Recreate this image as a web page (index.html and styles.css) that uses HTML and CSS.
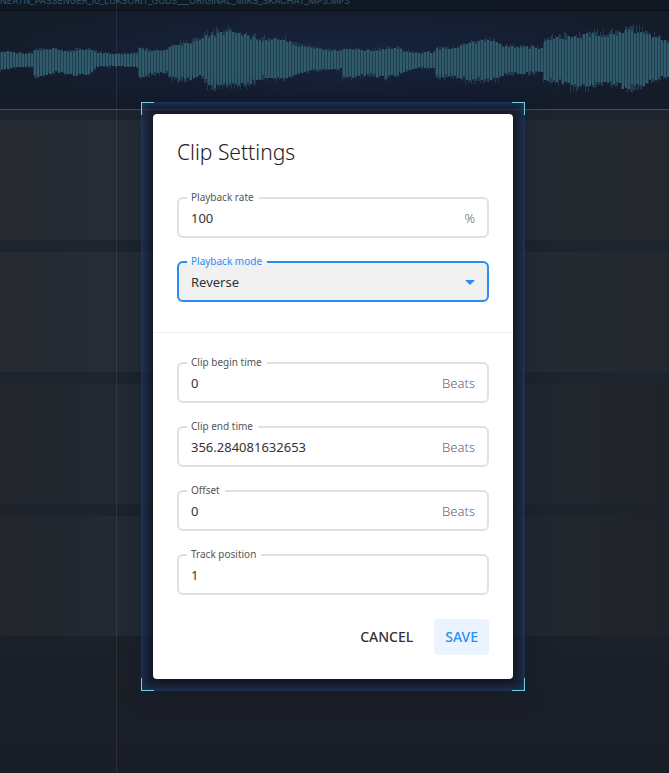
FILE: index.html
```html
<!DOCTYPE html>
<html lang="en">
<head>
    <meta charset="UTF-8">
    <meta name="viewport" content="width=device-width, initial-scale=1.0">
    <title>Clip Settings</title>
    <link rel="stylesheet" href="styles.css">
</head>
<body>
    <div class="timeline">
        <div class="clip">
            <div class="clip-name">NEATN_PASSENGER_10_LUKSORIT_GUDS___ORIGINAL_MIKS_SKACHAT_MP3.MP3</div>
            <svg id="waveform" class="waveform" viewBox="0 0 669 97" preserveAspectRatio="none"></svg>
        </div>
        <div class="track"></div>
        <div class="track"></div>
        <div class="track"></div>
        <div class="track"></div>
        <div class="playhead"></div>
    </div>

    <div class="overlay">
        <div class="frame">
            <span class="corner top left"></span>
            <span class="corner top right"></span>
            <span class="corner bottom left"></span>
            <span class="corner bottom right"></span>

            <form class="dialog" role="dialog" aria-labelledby="title">
                <h1 class="title" id="title">Clip Settings</h1>
                <div class="section playback">
                    <fieldset class="field">
                        <legend><label for="rate">Playback rate</label></legend>
                        <div class="field-row">
                            <input id="rate" type="text" value="100">
                            <span class="unit">%</span>
                        </div>
                    </fieldset>
                    <fieldset class="field active">
                        <legend><label for="mode">Playback mode</label></legend>
                        <div class="field-row">
                            <select id="mode">
                                <option>Reverse</option>
                                <option>Normal</option>
                            </select>
                            <svg class="arrow" viewBox="0 0 10 5"><path d="M0 0h10L5 5z"/></svg>
                        </div>
                    </fieldset>
                </div>
                <div class="section">
                    <fieldset class="field">
                        <legend><label for="begin">Clip begin time</label></legend>
                        <div class="field-row">
                            <input id="begin" type="text" value="0">
                            <span class="unit">Beats</span>
                        </div>
                    </fieldset>
                    <fieldset class="field">
                        <legend><label for="end">Clip end time</label></legend>
                        <div class="field-row">
                            <input id="end" type="text" value="356.284081632653">
                            <span class="unit">Beats</span>
                        </div>
                    </fieldset>
                    <fieldset class="field">
                        <legend><label for="offset">Offset</label></legend>
                        <div class="field-row">
                            <input id="offset" type="text" value="0">
                            <span class="unit">Beats</span>
                        </div>
                    </fieldset>
                    <fieldset class="field">
                        <legend><label for="position">Track position</label></legend>
                        <div class="field-row">
                            <input id="position" type="text" value="1">
                        </div>
                    </fieldset>
                </div>
                <div class="actions">
                    <button type="button" class="button">CANCEL</button>
                    <button type="button" class="button primary">SAVE</button>
                </div>
            </form>
        </div>
    </div>

    <script src="waveform.js"></script>
</body>
</html>
```
FILE: styles.css
```css
* {
    box-sizing: border-box;
}

body {
    margin: 0;
    min-height: 100vh;
    background-color: #1a1f27;
    color: #333;
    font-family: "Noto Sans", "Open Sans", sans-serif;
    font-size: 13px;
    overflow: hidden;
}

.timeline {
    position: relative;
    min-height: 100vh;
    background: linear-gradient(#1f252e, #1e242d 500px, #191d25);
}

.clip {
    height: 110px;
    background: radial-gradient(ellipse at 50% 50%, #17233f, #141c2a 75%);
    border-bottom: 1px solid #315565;
    margin-bottom: 10px;
}

.clip-name {
    height: 11px;
    background-color: #101923;
    border-bottom: 1px solid #090d14;
    color: #2f5a6b;
    font-family: Inter, sans-serif;
    font-size: 9px;
    line-height: 1px;
    white-space: nowrap;
}

.waveform {
    display: block;
    width: 100%;
    height: 97px;
}

.wave-peak {
    fill: #203c4e;
}

.wave-body {
    fill: #2f5b6b;
}

.track {
    height: 120px;
    margin-bottom: 12px;
    background: linear-gradient(90deg, #262930, #252d37 20%, #252a32 80%, #24272e);
}

.track:nth-child(n+4) {
    background: linear-gradient(90deg, #22252c, #222a33 20%, #22272f 80%, #202329);
}

.playhead {
    position: absolute;
    top: 0;
    bottom: 0;
    left: 116px;
    width: 1px;
    background-color: rgba(255, 255, 255, 0.08);
}

.overlay {
    position: absolute;
    top: 0;
    left: 0;
    right: 0;
    display: flex;
    justify-content: center;
    padding: 102px 3px 0 0;
}

.frame {
    position: relative;
    width: 100%;
    max-width: 384px;
    padding: 12px;
    background-color: rgba(24, 34, 56, 0.6);
    box-shadow: inset 0 0 10px #26427a, 0 0 24px rgba(10, 20, 40, 0.35);
}

.corner {
    position: absolute;
    width: 13px;
    height: 13px;
    border: 0 solid #6fd0e8;
}

.top {
    top: 0;
    border-top-width: 1px;
}

.bottom {
    bottom: 0;
    border-bottom-width: 1px;
}

.left {
    left: 0;
    border-left-width: 1px;
}

.right {
    right: 0;
    border-right-width: 1px;
}

.dialog {
    background-color: #fff;
    border-radius: 4px;
    box-shadow: 0 1px 8px rgba(10, 12, 18, 0.8);
}

.title {
    margin: 0;
    padding: 24px 24px 0;
    color: #212121;
    font-size: 21px;
    font-weight: 300;
    line-height: 28px;
}

.section {
    display: flex;
    flex-direction: column;
    gap: 17px;
    padding: 23px 24px 24px;
}

.playback {
    padding: 25px 24px 30px;
    border-bottom: 1px solid #eee;
}

.field {
    margin: 0;
    min-width: 0;
    padding: 0 12px 5px;
    border: 2px solid #e0e0e0;
    border-radius: 6px;
}

.field legend {
    height: 14px;
    margin-left: -4px;
    padding: 0 5px 0 4px;
    color: #555;
    font-size: 10px;
    line-height: 12px;
}

.field-row {
    display: flex;
    align-items: center;
    height: 26px;
}

.field input,
.field select {
    flex: 1;
    min-width: 0;
    height: 26px;
    padding: 0;
    border: none;
    outline: none;
    background: none;
    color: #333;
    font: inherit;
    appearance: none;
}

.unit {
    color: #666;
    font-weight: 300;
}

.field.active {
    border-color: #2a8cf5;
    background-color: #f1f1f1;
}

.active legend {
    color: #2a8cf5;
}

.arrow {
    width: 10px;
    height: 5px;
    fill: #2a8cf5;
}

.actions {
    display: flex;
    justify-content: flex-end;
    gap: 10px;
    padding: 0 24px 24px;
}

.button {
    height: 36px;
    padding: 0 11px 2px;
    border: none;
    border-radius: 4px;
    background: none;
    color: #333;
    font-family: inherit;
    font-size: 14px;
    font-weight: 500;
    cursor: pointer;
}

.primary {
    background-color: #ebf4fe;
    color: #2a8cf5;
}
```
FILE: waveform.js
```javascript
// x, height above the centre line, height below it
var envelope = [
    [0, 9, 10], [15, 7, 7], [30, 7, 7], [31, 10, 16], [45, 11, 16], [55, 12, 12], [65, 9, 15],
    [75, 11, 16], [88, 11, 14], [95, 8, 7], [115, 6, 6], [135, 7, 7], [138, 12, 17], [150, 9, 14],
    [165, 10, 13], [170, 14, 18], [185, 17, 20], [200, 22, 16], [210, 26, 28], [225, 30, 25],
    [238, 27, 26], [247, 24, 24], [260, 20, 18], [280, 22, 20], [295, 15, 14], [310, 13, 10],
    [325, 10, 9], [339, 9, 9], [340, 11, 18], [355, 11, 17], [370, 9, 14], [380, 11, 18],
    [395, 13, 16], [403, 9, 11], [415, 7, 8], [433, 8, 8], [435, 12, 17], [450, 11, 16],
    [465, 16, 20], [485, 20, 20], [497, 17, 18], [505, 13, 13], [520, 14, 14], [541, 12, 12],
    [543, 20, 20], [560, 23, 22], [575, 24, 28], [590, 26, 25], [605, 25, 22], [620, 30, 28],
    [640, 30, 27], [650, 24, 20], [669, 18, 16]
];

function levelAt(x, side) {
    var i = 1;
    while (envelope[i][0] < x) i++;
    var a = envelope[i - 1], b = envelope[i];
    return a[side] + (b[side] - a[side]) * (x - a[0]) / (b[0] - a[0]);
}

function noise(n) {
    var v = Math.sin(n * 12.9898) * 43758.5453;
    return v - Math.floor(v);
}

function bar(x, width, up, down) {
    up = Math.round(up);
    down = Math.round(down);
    return 'M' + x + ' ' + (center - up) + 'h' + width + 'v' + (up + down) + 'h-' + width + 'z';
}

var center = 49;
var peaks = '';
var bodies = '';
for (var x = 0; x < 669; x += 3) {
    var up = levelAt(x, 1);
    var down = levelAt(x, 2);
    peaks += bar(x, 1, up * (0.85 + noise(x) * 0.4), down * (0.85 + noise(x + 1) * 0.4));
    peaks += bar(x + 1, 2, up * (0.85 + noise(x + 2) * 0.3), down * (0.85 + noise(x + 3) * 0.3));
    bodies += bar(x + 1, 2, up * (0.85 + noise(x + 4) * 0.2), down * (0.85 + noise(x + 5) * 0.2));
}
document.getElementById('waveform').innerHTML =
    '<path class="wave-peak" d="' + peaks + '"/><path class="wave-body" d="' + bodies + '"/>';
```
